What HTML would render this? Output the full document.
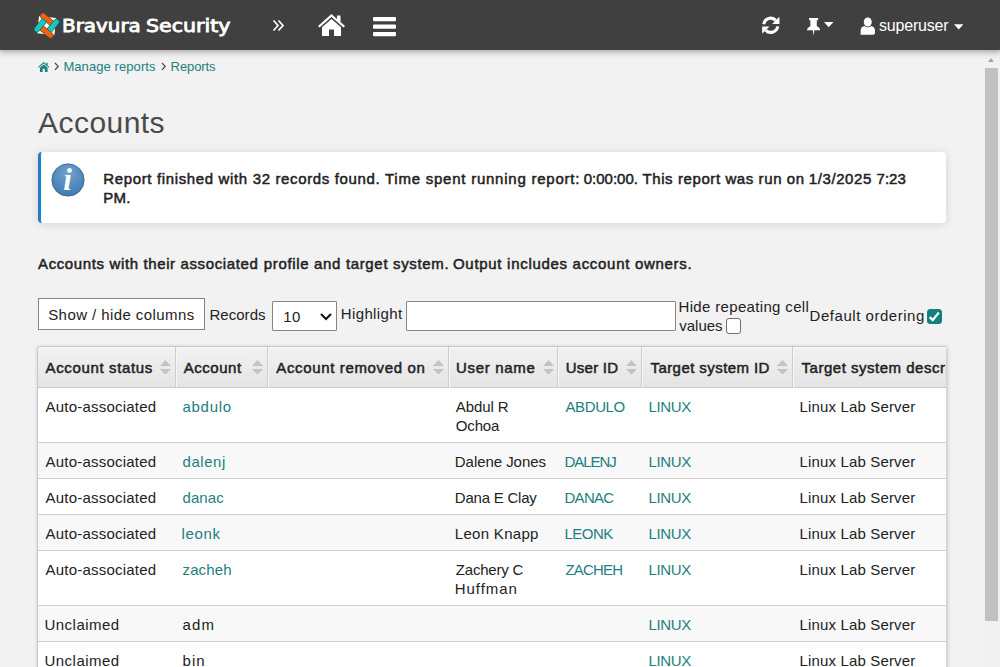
<!DOCTYPE html>
<html lang="en">
<head>
<meta charset="utf-8">
<title>Accounts</title>
<style>
*{box-sizing:border-box;}
html,body{margin:0;padding:0;}
body{width:1000px;height:667px;overflow:hidden;background:#f2f2f2;font-family:"Liberation Sans","DejaVu Sans",sans-serif;font-size:15px;color:#222;position:relative;}
a{color:#1d7f80;text-decoration:none;}
.t{position:absolute;white-space:nowrap;font-size:15px;line-height:17px;}
.b{-webkit-text-stroke:0.5px #222;}
#hdr{position:absolute;left:0;top:0;width:1000px;height:50px;background:#404040;box-shadow:0 1px 6px 1px rgba(0,0,0,.33);z-index:5;}
#hdr svg{position:absolute;}
#brand{position:absolute;left:0;top:0;font-family:"DejaVu Sans","Liberation Sans",sans-serif;font-size:17px;color:#fff;white-space:nowrap;line-height:22px;-webkit-text-stroke:0.8px #fff;}
#brand span{position:absolute;top:15px;transform-origin:0 0;}
#b1{left:61.5px;transform:scaleX(1.17);}
#b2{left:146px;transform:scaleX(1.21);}
#hdr .t{color:#fff;font-size:16px;line-height:17px;}
#crumb{position:absolute;left:0;top:50px;width:600px;height:30px;color:#444;}
#crumb .t{font-size:13px;line-height:15px;}
#crumb svg{position:absolute;}
h1{position:absolute;left:0;top:90px;width:900px;height:50px;margin:0;font-weight:normal;color:#4a4a4a;}
h1 .t{font-size:30px;line-height:33px;}
#info{position:absolute;left:38px;top:152px;width:908px;height:70.7px;background:#fff;border-left:3px solid #1b80d2;border-radius:4px;box-shadow:0 1px 10px rgba(0,0,0,.13);}
#desc{position:absolute;left:0;top:250px;width:900px;height:30px;margin:0;}
#ctl{position:absolute;left:0;top:290px;width:985px;height:50px;}
#btn{position:absolute;left:38px;top:8px;width:166.5px;height:31.5px;border:1px solid #858585;background:#fff;}
#sel{position:absolute;left:272px;top:10.5px;width:65px;height:30px;border:1px solid #858585;border-radius:1px;background:#fff;}
#inp{position:absolute;left:406px;top:10.5px;width:270px;height:30px;border:1px solid #858585;border-radius:1px;background:#fff;}
.cb{position:absolute;width:15.5px;height:15.5px;border:1.3px solid #6f6f6f;border-radius:3px;background:#fff;}
#tbl{position:absolute;left:37px;top:346px;width:909px;height:330px;border:1px solid #c8c8c8;border-right:0;border-radius:3px 0 0 0;background:#fff;overflow:hidden;box-shadow:1px 1px 4px rgba(0,0,0,.22);}
.th{position:absolute;top:0;height:41px;box-shadow:inset 0 1px 0 #f8f8f8;background:linear-gradient(#f2f2f2,#e4e4e4);border-bottom:1px solid #c8c8c8;border-left:1px solid #f7f7f7;border-right:1px solid #cdcdcd;overflow:hidden;}
.row{position:absolute;left:0;width:908px;border-bottom:1px solid #d0d0d0;background:#fff;}
.row.alt{background:#f8f8f8;}
.sort{position:absolute;top:12.6px;}
#sb{position:absolute;left:985px;top:50px;width:15px;height:617px;background:#f1f1f1;}
#sb i{position:absolute;left:0;top:18px;width:13px;height:553px;background:#c1c1c1;}
#sb b{position:absolute;left:2.7px;top:7.8px;width:0;height:0;border-left:3.8px solid transparent;border-right:3.8px solid transparent;border-bottom:4.3px solid #a3a3a3;}
</style>
</head>
<body>
<div id="hdr">
  <svg id="logo" style="left:30px;top:8px" width="34" height="34" viewBox="-17 -17 34 34">
    <g transform="translate(-0.3,0.6) scale(0.955)">
    <polygon points="-8,-10 10,-8 8,10 -10,8" fill="#fff"/>
    <g stroke="#404040" stroke-width="0.7">
      <path transform="translate(-6.0,-12.0) rotate(40)" d="M2.4,-2.9 H15.3 V2.9 H2.4 A2.6,2.9 0 0 1 2.4,-2.9Z" fill="#f4620d"/>
      <path transform="rotate(90) translate(-6.0,-12.0) rotate(40)" d="M2.4,-2.9 H15.3 V2.9 H2.4 A2.6,2.9 0 0 1 2.4,-2.9Z" fill="#0ccdc2"/>
      <path transform="rotate(180) translate(-6.0,-12.0) rotate(40)" d="M2.4,-2.9 H15.3 V2.9 H2.4 A2.6,2.9 0 0 1 2.4,-2.9Z" fill="#f4620d"/>
      <path transform="rotate(270) translate(-6.0,-12.0) rotate(40)" d="M2.4,-2.9 H15.3 V2.9 H2.4 A2.6,2.9 0 0 1 2.4,-2.9Z" fill="#0ccdc2"/>
    </g>
    </g>
  </svg>
  <div id="brand"><span id="b1">Bravura</span><span id="b2">Security</span></div>
  <svg style="left:272px;top:19px" width="13" height="13" viewBox="0 0 13 13"><path d="M1.5 1.5 L6 6.5 L1.5 11.5 M6.5 1.5 L11 6.5 L6.5 11.5" fill="none" stroke="#fff" stroke-width="1.7"/></svg>
  <svg style="left:317px;top:13px" width="29" height="24" viewBox="0 0 29 24"><path d="M14.5 1 L20 6 V2.5 H23.5 V9 L28 13 L26.5 14.5 L14.5 4 L2.5 14.5 L1 13 Z" fill="#fff"/><path d="M14.5 6 L24 14.3 V23 H17 V16.5 H12 V23 H5 V14.3 Z" fill="#fff"/></svg>
  <svg style="left:373.4px;top:16px" width="23" height="22" viewBox="0 0 23 22"><rect x="0" y="1" width="23" height="4.3" rx="1" fill="#fff"/><rect x="0" y="8.4" width="23" height="4.3" rx="1" fill="#fff"/><rect x="0" y="15.9" width="23" height="4.3" rx="1" fill="#fff"/></svg>
  <svg style="left:761px;top:16.3px" width="19.6" height="18.6" viewBox="0 0 19 19"><path d="M2.4 8.4 A7.2 7.2 0 0 1 14.6 4.4" fill="none" stroke="#fff" stroke-width="3.2"/><path d="M16.6 10.6 A7.2 7.2 0 0 1 4.4 14.6" fill="none" stroke="#fff" stroke-width="3.2"/><path d="M18.3 0.8 V8.3 H10.8 Z" fill="#fff"/><path d="M0.7 18.2 V10.7 H8.2 Z" fill="#fff"/></svg>
  <svg style="left:806.8px;top:18.4px" width="13.2" height="17.8" viewBox="0 0 13.2 17.8"><path d="M2.6 0 H10.6 Q11.2 0 11.2 0.6 V1.6 Q11.2 2.2 10.6 2.2 H9.8 V8.2 C11.8 9 13.2 10.5 13.2 12.3 H7.4 L6.6 17.8 L5.8 12.3 H0 C0 10.5 1.4 9 3.4 8.2 V2.2 H2.6 Q2 2.2 2 1.6 V0.6 Q2 0 2.6 0 Z" fill="#fff"/></svg>
  <svg style="left:823.6px;top:22.2px" width="9.4" height="5.7" viewBox="0 0 10 6"><path d="M0 0 H10 L5 5.5 Z" fill="#fff"/></svg>
  <svg style="left:860px;top:16.7px" width="15.6" height="18.2" viewBox="0 0 16 19"><ellipse cx="8" cy="5.2" rx="4.2" ry="4.8" fill="#fff"/><path d="M0.5 18.5 V14 C0.5 11 2.5 9.6 4.6 9.3 C5.6 10.3 6.7 10.8 8 10.8 C9.3 10.8 10.4 10.3 11.4 9.3 C13.5 9.6 15.5 11 15.5 14 V16.5 C15.5 17.8 14.6 18.5 13.5 18.5 Z" fill="#fff"/></svg>
  <span class="t" style="left:879px;top:17px;letter-spacing:-0.19px;">superuser</span>
  <svg style="left:953.5px;top:23.5px" width="9.5" height="6" viewBox="0 0 10 6"><path d="M0 0 H10 L5 5.5 Z" fill="#fff"/></svg>
</div>
<div id="crumb">
  <svg style="left:38px;top:11.5px" width="11.5" height="10" viewBox="0 0 12 10.5"><path d="M6 0 L8.6 2.3 V0.8 H10 V3.6 L12 5.3 L11.3 6.1 L6 1.6 L0.7 6.1 L0 5.3 Z" fill="#1d7f80"/><path d="M6 2.6 L10 6 V10.5 H7.2 V7.2 H4.8 V10.5 H2 V6 Z" fill="#1d7f80"/></svg>
  <svg style="left:53.5px;top:11.8px" width="6" height="9" viewBox="0 0 6 9"><path d="M1 1 L4.2 4.4 L1 7.8" fill="none" stroke="#444" stroke-width="1.2"/></svg>
  <a class="t" style="left:63.4px;top:9px;letter-spacing:0.081px;">Manage reports</a>
  <svg style="left:160.5px;top:11.8px" width="6" height="9" viewBox="0 0 6 9"><path d="M1 1 L4.2 4.4 L1 7.8" fill="none" stroke="#444" stroke-width="1.2"/></svg>
  <a class="t" style="left:170.6px;top:9px;letter-spacing:-0.103px;">Reports</a>
</div>
<h1><span class="t" style="left:38px;top:16px;letter-spacing:0.457px;">Accounts</span></h1>
<div id="info">
  <svg style="position:absolute;left:9.1px;top:10.1px" width="36" height="36" viewBox="0 0 36 36">
    <defs><radialGradient id="ig" cx="50%" cy="30%" r="70%"><stop offset="0" stop-color="#74a3cf"/><stop offset="1" stop-color="#3f79b0"/></radialGradient></defs>
    <circle cx="18" cy="18" r="16.1" fill="url(#ig)" stroke="#356a9f" stroke-width="1"/>
    <text x="17.6" y="27.6" text-anchor="middle" font-family="Liberation Serif, serif" font-style="italic" font-weight="bold" font-size="31" fill="#fff">i</text>
  </svg>
  <span class="t b" style="left:62.25px;top:18px;letter-spacing:0.643px;">Report finished with 32 records found.</span> <span class="t b" style="left:344px;top:18px;letter-spacing:0.76px;">Time spent running report:</span> <span class="t b" style="left:542.75px;top:18px;letter-spacing:0.001px;">0:00:00.</span> <span class="t b" style="left:601.5px;top:18px;letter-spacing:0.589px;">This report was run on</span> <span class="t b" style="left:767.8px;top:18px;letter-spacing:0.593px;">1/3/2025</span> <span class="t b" style="left:835.5px;top:18px;letter-spacing:0.049px;">7:23</span>
  <span class="t b" style="left:62.25px;top:37px;letter-spacing:0.25px;">PM.</span>
</div>
<p id="desc"><span class="t b" style="left:38px;top:5px;letter-spacing:0.623px;">Accounts with their associated</span> <span class="t b" style="left:263.75px;top:5px;letter-spacing:0.66px;">profile and target system.</span> <span class="t b" style="left:453px;top:5px;letter-spacing:0.701px;">Output includes account owners.</span></p>
<div id="ctl">
  <div id="btn"></div><span class="t" style="left:48.2px;top:16px;letter-spacing:0.425px;">Show / hide columns</span>
  <span class="t" style="left:209.5px;top:16px;letter-spacing:0.024px;">Records</span>
  <div id="sel"><svg style="position:absolute;left:46.5px;top:11.5px" width="12" height="8" viewBox="0 0 12 8"><path d="M1 1 L6 6 L11 1" fill="none" stroke="#111" stroke-width="2"/></svg></div><span class="t" style="left:283.25px;top:18px;letter-spacing:0.408px;">10</span>
  <span class="t" style="left:340.75px;top:15px;letter-spacing:0.381px;">Highlight</span>
  <div id="inp"></div>
  <span class="t" style="left:678.5px;top:8px;letter-spacing:0.338px;">Hide repeating cell</span>
  <span class="t" style="left:679.3px;top:27px;letter-spacing:-0.032px;">values</span>
  <div class="cb" style="left:725.5px;top:28.3px"></div>
  <span class="t" style="left:809.6px;top:17px;letter-spacing:0.534px;">Default ordering</span>
  <div class="cb" style="left:927px;top:19px;width:15px;height:15px;border-width:1px;background:#12807f;border-color:#12807f"><svg style="position:absolute;left:0;top:0" width="13" height="13" viewBox="0 0 13 13"><path d="M1.7 7.1 L4.7 10.1 L10.8 2.5" fill="none" stroke="#fff" stroke-width="2.2"/></svg></div>
</div>
<div id="tbl">
  <div class="th" style="left:0px;width:138px;border-left:0;"><span class="t b" style="left:7.5px;top:12px;letter-spacing:0.643px;">Account status</span><svg class="sort" style="left:121.9px" width="11" height="14.8" viewBox="0 0 11 14.8"><path d="M0 5.9 L5.5 0 L11 5.9 Z M0 8.9 L5.5 14.8 L11 8.9 Z" fill="#c3c3c3"/></svg></div>
  <div class="th" style="left:138px;width:92px;"><span class="t b" style="left:6.75px;top:12px;letter-spacing:0.536px;">Account</span><svg class="sort" style="left:75px" width="11" height="14.8" viewBox="0 0 11 14.8"><path d="M0 5.9 L5.5 0 L11 5.9 Z M0 8.9 L5.5 14.8 L11 8.9 Z" fill="#c3c3c3"/></svg></div>
  <div class="th" style="left:230px;width:181px;"><span class="t b" style="left:7.25px;top:12px;letter-spacing:0.648px;">Account removed on</span><svg class="sort" style="left:163.5px" width="11" height="14.8" viewBox="0 0 11 14.8"><path d="M0 5.9 L5.5 0 L11 5.9 Z M0 8.9 L5.5 14.8 L11 8.9 Z" fill="#c3c3c3"/></svg></div>
  <div class="th" style="left:411px;width:109px;"><span class="t b" style="left:6px;top:12px;letter-spacing:0.685px;">User name</span><svg class="sort" style="left:92.5px" width="11" height="14.8" viewBox="0 0 11 14.8"><path d="M0 5.9 L5.5 0 L11 5.9 Z M0 8.9 L5.5 14.8 L11 8.9 Z" fill="#c3c3c3"/></svg></div>
  <div class="th" style="left:520px;width:84px;"><span class="t b" style="left:6.75px;top:12px;letter-spacing:0.249px;">User ID</span><svg class="sort" style="left:67.3px" width="11" height="14.8" viewBox="0 0 11 14.8"><path d="M0 5.9 L5.5 0 L11 5.9 Z M0 8.9 L5.5 14.8 L11 8.9 Z" fill="#c3c3c3"/></svg></div>
  <div class="th" style="left:604px;width:151px;"><span class="t b" style="left:7.5px;top:12px;letter-spacing:0.427px;">Target system ID</span><svg class="sort" style="left:134.2px" width="11" height="14.8" viewBox="0 0 11 14.8"><path d="M0 5.9 L5.5 0 L11 5.9 Z M0 8.9 L5.5 14.8 L11 8.9 Z" fill="#c3c3c3"/></svg></div>
  <div class="th" style="left:755px;width:153px;border-right:0;"><span class="t b" style="left:7.6px;top:12px;letter-spacing:0.51px;">Target system description</span></div>
  <div class="row" style="top:41px;height:55px"><span class="t" style="left:7.5px;top:10px;letter-spacing:0.216px;">Auto-associated</span><a class="t" style="left:144.5px;top:10px;letter-spacing:0.71px;">abdulo</a><span class="t" style="left:417.8px;top:10px;letter-spacing:-0.097px;">Abdul R</span><span class="t" style="left:417.8px;top:29px;letter-spacing:-0.163px;">Ochoa</span><a class="t" style="left:527.5px;top:10px;letter-spacing:-0.403px;">ABDULO</a><a class="t" style="left:610.6px;top:10px;letter-spacing:-0.394px;">LINUX</a><span class="t" style="left:761.6px;top:10px;letter-spacing:0.146px;">Linux Lab Server</span></div>
  <div class="row alt" style="top:96px;height:36px"><span class="t" style="left:7.5px;top:10px;letter-spacing:0.216px;">Auto-associated</span><a class="t" style="left:144.5px;top:10px;letter-spacing:0.56px;">dalenj</a><span class="t" style="left:416.8px;top:10px;letter-spacing:-0.048px;">Dalene Jones</span><a class="t" style="left:526.5px;top:10px;letter-spacing:-1.053px;">DALENJ</a><a class="t" style="left:610.6px;top:10px;letter-spacing:-0.394px;">LINUX</a><span class="t" style="left:761.6px;top:10px;letter-spacing:0.146px;">Linux Lab Server</span></div>
  <div class="row" style="top:132px;height:36px"><span class="t" style="left:7.5px;top:10px;letter-spacing:0.216px;">Auto-associated</span><a class="t" style="left:144.5px;top:10px;letter-spacing:0.083px;">danac</a><span class="t" style="left:416.8px;top:10px;letter-spacing:-0.221px;">Dana E Clay</span><a class="t" style="left:526.5px;top:10px;letter-spacing:-0.719px;">DANAC</a><a class="t" style="left:610.6px;top:10px;letter-spacing:-0.394px;">LINUX</a><span class="t" style="left:761.6px;top:10px;letter-spacing:0.146px;">Linux Lab Server</span></div>
  <div class="row alt" style="top:168px;height:36px"><span class="t" style="left:7.5px;top:10px;letter-spacing:0.216px;">Auto-associated</span><a class="t" style="left:143.5px;top:10px;letter-spacing:0.685px;">leonk</a><span class="t" style="left:416.8px;top:10px;letter-spacing:0.304px;">Leon Knapp</span><a class="t" style="left:526.5px;top:10px;letter-spacing:-0.537px;">LEONK</a><a class="t" style="left:610.6px;top:10px;letter-spacing:-0.394px;">LINUX</a><span class="t" style="left:761.6px;top:10px;letter-spacing:0.146px;">Linux Lab Server</span></div>
  <div class="row" style="top:204px;height:55px"><span class="t" style="left:7.5px;top:10px;letter-spacing:0.216px;">Auto-associated</span><a class="t" style="left:144.5px;top:10px;letter-spacing:0.135px;">zacheh</a><span class="t" style="left:417.8px;top:10px;letter-spacing:-0.207px;">Zachery C</span><span class="t" style="left:416.8px;top:29px;letter-spacing:0.937px;">Huffman</span><a class="t" style="left:527.5px;top:10px;letter-spacing:-0.827px;">ZACHEH</a><a class="t" style="left:610.6px;top:10px;letter-spacing:-0.394px;">LINUX</a><span class="t" style="left:761.6px;top:10px;letter-spacing:0.146px;">Linux Lab Server</span></div>
  <div class="row alt" style="top:259px;height:36px"><span class="t" style="left:6.5px;top:10px;letter-spacing:0.473px;">Unclaimed</span><span class="t" style="left:144.5px;top:10px;letter-spacing:1.208px;">adm</span><a class="t" style="left:610.6px;top:10px;letter-spacing:-0.394px;">LINUX</a><span class="t" style="left:761.6px;top:10px;letter-spacing:0.146px;">Linux Lab Server</span></div>
  <div class="row" style="top:295px;height:36px"><span class="t" style="left:6.5px;top:10px;letter-spacing:0.473px;">Unclaimed</span><span class="t" style="left:144.5px;top:10px;letter-spacing:1.063px;">bin</span><a class="t" style="left:610.6px;top:10px;letter-spacing:-0.394px;">LINUX</a><span class="t" style="left:761.6px;top:10px;letter-spacing:0.146px;">Linux Lab Server</span></div>
</div>
<div id="sb"><b></b><i></i></div>
</body>
</html>
